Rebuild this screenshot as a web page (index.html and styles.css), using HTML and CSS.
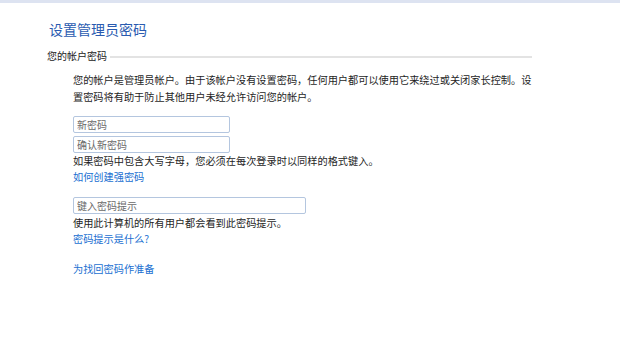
FILE: index.html
```html
<!DOCTYPE html>
<html lang="zh-CN">
<head>
    <meta charset="UTF-8">
    <title>设置管理员密码</title>
    <link rel="stylesheet" href="styles.css">
</head>
<body>
    <div class="top-strip"></div>

    <div class="page">
        <h1 class="title">设置管理员密码</h1>

        <div class="section-head">
            <span class="section-label">您的帐户密码</span>
            <span class="section-rule"></span>
        </div>

        <div class="content">
            <p class="intro">您的帐户是管理员帐户。由于该帐户没有设置密码，任何用户都可以使用它来绕过或关闭家长控制。设置密码将有助于防止其他用户未经允许访问您的帐户。</p>

            <form class="pw-form">
                <input type="password" class="field field-short" placeholder="新密码">
                <input type="password" class="field field-short" placeholder="确认新密码">
                <div class="note">如果密码中包含大写字母，您必须在每次登录时以同样的格式键入。</div>
                <a href="#" class="link">如何创建强密码</a>

                <input type="text" class="field field-long hint-field" placeholder="键入密码提示">
                <div class="note">使用此计算机的所有用户都会看到此密码提示。</div>
                <a href="#" class="link">密码提示是什么?</a>

                <a href="#" class="link link-gap">为找回密码作准备</a>
            </form>
        </div>
    </div>
</body>
</html>
```

FILE: styles.css
```css
body {
    margin: 0;
    padding: 0;
    background: #fff;
    font-family: "Noto Sans CJK SC", "Noto Sans", sans-serif;
    color: #1e1e1e;
}

.top-strip {
    height: 3px;
    background: #dde3f1;
}

.page {
    padding-left: 47px;
}

.title {
    margin: 18px 0 0 2px;
    font-size: 14px;
    line-height: 16px;
    font-weight: normal;
    color: #2a5bb0;
}

.section-head {
    display: flex;
    align-items: center;
    margin-top: 11px;
    width: 485px;
}

.section-label {
    font-size: 10px;
    line-height: 16px;
    color: #222;
}

.section-rule {
    flex: 1;
    height: 2px;
    margin-left: 3px;
    margin-top: 2px;
    background: #e3e3e3;
}

.content {
    padding-left: 26px;
}

.intro {
    margin: 7px 0 0;
    width: 462px;
    font-size: 10.2px;
    line-height: 17px;
}

.pw-form {
    display: flex;
    flex-direction: column;
    align-items: flex-start;
    margin-top: 11px;
}

.field {
    box-sizing: border-box;
    height: 17px;
    padding: 0 3px;
    border: 1px solid #b4c6df;
    border-radius: 2px;
    font-family: inherit;
    font-size: 10px;
    color: #333;
    outline: none;
}

.field::placeholder {
    color: #6a6a6a;
}

.field-short {
    width: 157px;
    margin-bottom: 3px;
}

.field-long {
    width: 233px;
}

.hint-field {
    margin-top: 12px;
    margin-bottom: 1px;
}

.field-short + .field-short {
    margin-bottom: 0;
}

.note {
    font-size: 10.2px;
    line-height: 16px;
}

.link {
    font-size: 10.2px;
    line-height: 16px;
    color: #1a6fd1;
    text-decoration: none;
}

.link-gap {
    margin-top: 14px;
}
```
